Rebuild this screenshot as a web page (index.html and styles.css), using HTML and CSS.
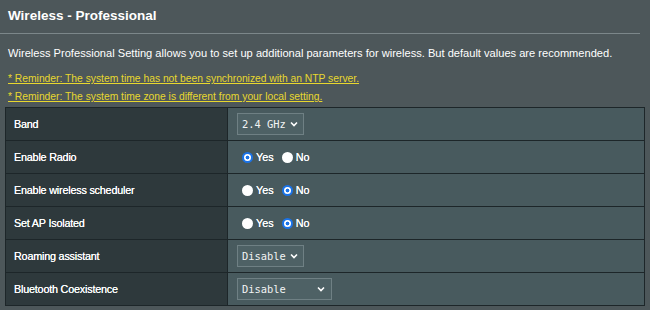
FILE: index.html
```html
<!DOCTYPE html>
<html>
<head>
<meta charset="utf-8">
<link rel="stylesheet" href="styles.css">
</head>
<body>
<div class="page">
  <h1 class="title">Wireless - Professional</h1>
  <div class="rule"></div>
  <p class="desc">Wireless Professional Setting allows you to set up additional parameters for wireless. But default values are recommended.</p>
  <p class="hint"><a href="#">* Reminder: The system time has not been synchronized with an NTP server.</a></p>
  <p class="hint"><a href="#">* Reminder: The system time zone is different from your local setting.</a></p>
  <div class="table">
    <div class="label">Band</div>
    <div class="value"><span class="select"><span class="sel-text">2.4 GHz</span><svg class="chev" width="8" height="6" viewBox="0 0 8 6"><path d="M1 1.5 L4 4.5 L7 1.5" fill="none" stroke="#fff" stroke-width="1.6"/></svg></span></div>

    <div class="label">Enable Radio</div>
    <div class="value"><span class="radio on"></span><span class="rtext">Yes</span><span class="radio"></span><span class="rtext">No</span></div>

    <div class="label">Enable wireless scheduler</div>
    <div class="value"><span class="radio"></span><span class="rtext">Yes</span><span class="radio on"></span><span class="rtext">No</span></div>

    <div class="label">Set AP Isolated</div>
    <div class="value"><span class="radio"></span><span class="rtext">Yes</span><span class="radio on"></span><span class="rtext">No</span></div>

    <div class="label">Roaming assistant</div>
    <div class="value"><span class="select"><span class="sel-text">Disable</span><svg class="chev" width="8" height="6" viewBox="0 0 8 6"><path d="M1 1.5 L4 4.5 L7 1.5" fill="none" stroke="#fff" stroke-width="1.6"/></svg></span></div>

    <div class="label">Bluetooth Coexistence</div>
    <div class="value"><span class="select wide"><span class="sel-text">Disable</span><svg class="chev" width="8" height="6" viewBox="0 0 8 6"><path d="M1 1.5 L4 4.5 L7 1.5" fill="none" stroke="#fff" stroke-width="1.6"/></svg></span></div>
  </div>
</div>
</body>
</html>
```
FILE: styles.css
```css
html, body {
  margin: 0;
  padding: 0;
  background: #4d575a;
  font-family: "Liberation Sans", Arial, sans-serif;
  color: #ffffff;
  overflow: hidden;
}
.page {
  width: 650px;
  height: 310px;
}
.title {
  margin: 7px 0 0 8px;
  font-size: 13.5px;
  line-height: 17px;
  font-weight: bold;
}
.rule {
  margin-top: 9px;
  width: 640px;
  height: 1px;
  background: #7c878a;
}
.desc {
  margin: 12px 0 0 8px;
  font-size: 11.1px;
  line-height: 14px;
  white-space: nowrap;
}
.hint {
  margin: 0 0 0 8px;
  font-size: 10.3px;
  line-height: 18px;
  white-space: nowrap;
}
.desc + .hint {
  margin-top: 10px;
}
.hint a {
  color: #e8d72e;
  text-decoration: underline;
}
.table {
  margin: 1px 5px 0 5px;
  width: 638px;
  border: 1px solid #1d2629;
  border-bottom: none;
  display: grid;
  grid-template-columns: 222px 1fr;
  grid-auto-rows: 33px;
}
.label, .value {
  display: flex;
  align-items: center;
  border-bottom: 1px solid #1d2629;
}
.label {
  background: #2e393c;
  border-right: 1px solid #1d2629;
  padding-left: 8px;
  font-size: 10.8px;
  letter-spacing: -0.2px;
  text-shadow: 0 0 0.4px #ffffff;
}
.value {
  background: #485a5e;
  padding-left: 9px;
}
.select {
  display: flex;
  align-items: center;
  box-sizing: border-box;
  width: 67px;
  height: 22px;
  border: 1px solid #6f8084;
  background: #4e6165;
  padding: 0 5px 0 4px;
  justify-content: space-between;
}
.select.wide {
  width: 95px;
  padding-right: 6px;
}
.sel-text {
  font-family: "DejaVu Sans Mono", monospace;
  font-size: 10.4px;
  color: #f2f4f4;
}
.chev {
  display: block;
}
.radio {
  box-sizing: border-box;
  width: 11px;
  height: 11px;
  border-radius: 50%;
  background: #ffffff;
  margin-left: 5px;
}
.radio + .rtext + .radio {
  margin-left: 8px;
}
.radio.on {
  border: 2px solid #1a73e8;
  background: radial-gradient(circle, #1a73e8 0 1.6px, #ffffff 2.2px);
}
.rtext {
  margin-left: 3px;
  font-size: 10.8px;
  text-shadow: 0 0 0.4px #ffffff;
}
```
